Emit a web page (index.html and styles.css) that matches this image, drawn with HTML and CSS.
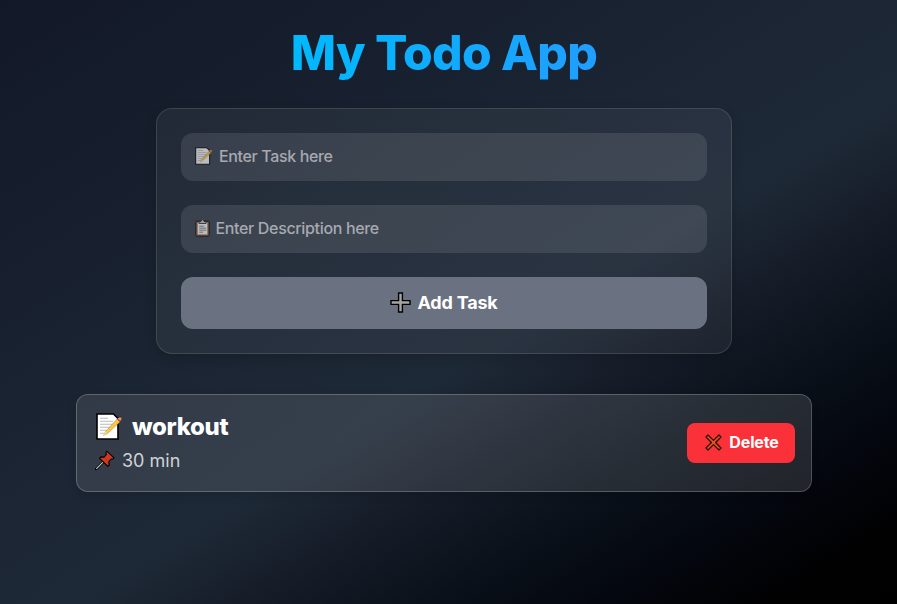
FILE: index.html
```html
<!DOCTYPE html>
<html lang="en">
<head>
<meta charset="utf-8">
<title>My Todo App</title>
<link rel="stylesheet" href="styles.css">
</head>
<body>
<svg class="sprite" aria-hidden="true">
  <symbol id="memo" viewBox="0 0 27 27">
    <path d="M1 1H17.5L22 5.5V26H1Z" fill="#fff" stroke="#000" stroke-width="1.6"/>
    <path d="M4 5.2h8M4 8.2h13M4 11.2h13M4 14.2h10M4 17.2h6M4 20.2h4" stroke="#bbb" stroke-width="1.1"/>
    <path d="M7.5 22.5L9.5 18.5 22.3 4.7Q24.5 3 26 5.2 26.5 6.5 25 8L11.3 20.7Z" fill="#fcc641" stroke="#5c4a30" stroke-width=".3"/>
    <path d="M21.3 5.7L23 4Q25 3.4 26 5.2 26.3 6.5 24 8.7Z" fill="#e98a87" stroke="#111" stroke-width=".8"/>
    <path d="M7.5 22.5L9.5 18.5 11.3 20.7Z" fill="#f4d2a5"/>
  </symbol>
  <symbol id="clipboard" viewBox="0 0 15 18">
    <rect x=".9" y="2.2" width="13.2" height="14.9" rx=".7" fill="#b77c50" stroke="#000" stroke-width="1"/>
    <path d="M2.8 3.8h9.4v11.5H2.8z" fill="#fff"/>
    <path d="M4 4.5V2.4H6Q6 .6 7.5.6T9 2.4h2v2.1z" fill="#ccc" stroke="#111" stroke-width=".8"/>
    <path d="M4.2 7.2h5M4.2 9.2h7M4.2 11.2h7M4.2 13.2h4" stroke="#666" stroke-width=".8"/>
  </symbol>
  <symbol id="plus" viewBox="0 0 21 21">
    <path d="M8.6 1h3.8v7.6H20v3.8h-7.6V20H8.6v-7.6H1V8.6h7.6z" fill="#a6a6a4" stroke="#000" stroke-width="1.4"/>
  </symbol>
  <symbol id="pin" viewBox="0 0 20 20">
    <path d="M1 19.2L7.8 12.4" stroke="#000" stroke-width="2.6" stroke-linecap="round"/>
    <path d="M1.3 18.9L8 12.2" stroke="#ccc" stroke-width="1.1"/>
    <path d="M11.8 1.2L19 7.8 18 9 16.2 9 13.7 11.8 14.2 15.2 12.9 16.4 4.6 8.3 5.8 6.9 9.1 7.1 11.4 4.4 10.8 2.7Z" fill="#cf3b20" stroke="#000" stroke-width="1.1" stroke-linejoin="round"/>
    <path d="M9.1 7.1L13.7 11.8" stroke="#a72812" stroke-width=".5"/>
  </symbol>
  <symbol id="cross" viewBox="0 0 17 17">
    <path d="M3 1L8.5 6.4 14 1 16 3 10.6 8.5 16 14 14 16 8.5 10.6 3 16 1 14 6.4 8.5 1 3Z" fill="#ea5120" stroke="#240b06" stroke-width="1.2" stroke-linejoin="round"/>
  </symbol>
</svg>
<main class="page">
  <h1 class="title"><span class="title-text">My Todo App</span></h1>
  <form class="form">
    <label class="field"><svg class="icon-task"><use href="#memo"/></svg><input class="input input-task" placeholder="Enter Task here"></label>
    <label class="field"><svg class="icon-desc"><use href="#clipboard"/></svg><input class="input input-desc" placeholder="Enter Description here"></label>
    <button class="add" type="button"><svg class="icon-plus"><use href="#plus"/></svg><span>Add Task</span></button>
  </form>
  <section class="task">
    <div class="task-info">
      <h2 class="task-name"><svg class="icon-memo"><use href="#memo"/></svg><span>workout</span></h2>
      <p class="task-desc"><svg class="icon-pin"><use href="#pin"/></svg><span>30 min</span></p>
    </div>
    <button class="delete" type="button"><svg class="icon-cross"><use href="#cross"/></svg><span>Delete</span></button>
  </section>
</main>
</body>
</html>
```
FILE: styles.css
```css
* { box-sizing: border-box; }
html { background: #000; }
body { margin: 0; font-family: Inter, sans-serif; color: #fff; }
.sprite { display: none; }
svg { flex: none; }
.page {
  height: 604px;
  padding: 24px 9px 0 0;
  display: flex;
  flex-direction: column;
  align-items: center;
  background: linear-gradient(148.5deg, #121827, #1e2937 56%, #161d29 65%, #0a111a 75%, #04070f 84%, #010102 93%, #000);
  overflow: hidden;
}
.title {
  width: 736px;
  margin: 0 0 24px;
  height: 60px;
  font-size: 48px;
  line-height: 58px;
  font-weight: 800;
  text-align: center;
}
.title-text {
  display: block;
  letter-spacing: -.65px;
  color: transparent;
  background: linear-gradient(90deg, #00b9fd 30%, #239bff 75%);
  background-clip: text;
}
.form {
  width: 576px;
  height: 246px;
  padding: 24px;
  display: flex;
  flex-direction: column;
  gap: 24px;
  border: 1px solid rgba(255,255,255,.12);
  border-radius: 16px;
  background: rgba(255,255,255,.055);
  box-shadow: 0 4px 12px rgba(0,0,0,.16);
}
.field {
  height: 48px;
  padding-left: 14px;
  display: flex;
  align-items: center;
  border-radius: 12px;
  background: rgba(255,255,255,.1);
}
.input {
  flex: 1;
  padding: 0 0 2px;
  border: 0;
  outline: 0;
  background: none;
  font: 450 16px/24px Inter, sans-serif;
  color: #fff;
}
.input::placeholder { color: #a7a9b0; opacity: 1; }
.input-task { letter-spacing: -.36px; margin-left: 6px; }
.input-desc { letter-spacing: -.34px; margin-left: 5.5px; }
.icon-task { width: 18px; height: 18px; opacity: .65; }
.icon-desc { width: 15px; height: 18px; opacity: .65; }
.icon-task, .icon-desc { margin-bottom: 2px; }
.add, .delete {
  display: flex;
  align-items: center;
  justify-content: center;
  border: 0;
  color: #fff;
  font-family: Inter, sans-serif;
}
.add span, .delete span { padding-bottom: 2px; }
.add {
  height: 52px;
  gap: 6px;
  border-radius: 12px;
  background: #6a7180;
  font-size: 18px;
  font-weight: 700;
  letter-spacing: -.2px;
}
.icon-plus { width: 21px; height: 21px; margin-bottom: 1px; }
.task {
  width: 736px;
  height: 98px;
  margin-top: 40px;
  padding: 0 16px 2px 18px;
  display: flex;
  align-items: center;
  justify-content: space-between;
  border: 1px solid rgba(255,255,255,.22);
  border-radius: 12px;
  background: linear-gradient(90deg, rgba(255,255,255,.1), rgba(255,255,255,.12));
  box-shadow: 0 4px 10px rgba(0,0,0,.12);
}
.task-name, .task-desc { margin: 0; display: flex; align-items: center; }
.task-name { height: 32px; padding-left: 1px; font-size: 24px; font-weight: 800; letter-spacing: -.35px; gap: 9px; }
.task-desc { height: 28px; margin-top: 4px; font-size: 18px; color: #d0d3d8; gap: 7px; }
.icon-memo { width: 27px; height: 27px; }
.icon-pin { width: 20px; height: 20px; }
.delete {
  width: 108px;
  height: 40px;
  margin-top: 2px;
  padding: 0 0 0 2px;
  gap: 7px;
  border-radius: 8px;
  background: #fa3138;
  font-size: 16px;
  font-weight: 700;
  letter-spacing: -.15px;
}
.icon-cross { width: 17px; height: 17px; margin-bottom: 1px; }
```
